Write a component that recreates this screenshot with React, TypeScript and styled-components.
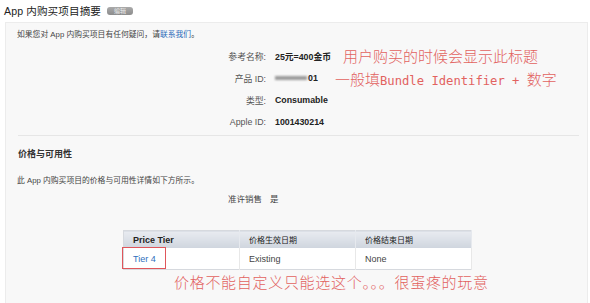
import styled, { createGlobalStyle } from "styled-components";

const GlobalStyle = createGlobalStyle`
  html, body {
    margin: 0;
    padding: 0;
    background: #ffffff;
  }
  body {
    font-family: "Liberation Sans", "Noto Sans CJK SC", sans-serif;
    color: #333;
  }
`;

const Page = styled.div`
  position: relative;
  width: 590px;
  height: 303px;
  overflow: hidden;
`;

const Header = styled.div`
  display: flex;
  align-items: center;
  gap: 6px;
  height: 20px;
  padding: 0 0 0 4px;
`;

const Title = styled.h1`
  margin: 0;
  font-size: 10.6px;
  font-weight: 400;
  color: #222;
  letter-spacing: 0.1px;
`;

const Badge = styled.span`
  display: inline-flex;
  align-items: center;
  justify-content: center;
  width: 26px;
  height: 8px;
  border-radius: 3px;
  background: linear-gradient(#aaa, #8c8c8c);
  color: #eee;
  font-size: 6px;
  line-height: 1;
  margin-top: 1px;
`;

const Panel = styled.div`
  margin: 2px 2px 0 5px;
  height: 300px;
  box-sizing: border-box;
  background: #f8f8f8;
  border: 1px solid #ececec;
  border-bottom: none;
  padding: 6px 10px 0 11px;
`;

const Note = styled.p<{ $top?: number }>`
  margin: ${(p) => p.$top ?? 0}px 0 0;
  font-size: 7.8px;
  line-height: 12px;
  color: #444;
`;

const Link = styled.span`
  color: #2a6ab8;
`;

const Details = styled.div`
  display: grid;
  grid-template-columns: 249px auto;
  column-gap: 9px;
  grid-auto-rows: 22px;
  align-items: center;
  margin-top: 4px;
`;

const Label = styled.span`
  text-align: right;
  font-size: 8.8px;
  color: #555;
`;

const Value = styled.span`
  font-size: 8.8px;
  font-weight: 700;
  color: #222;
  display: flex;
  align-items: center;
`;

const Blur = styled.span`
  display: inline-block;
  width: 32px;
  height: 4px;
  background: #9a9a9a;
  filter: blur(1.2px);
  margin-right: 1px;
`;

const Divider = styled.hr`
  margin: 2px 0 0 1px;
  border: none;
  border-top: 1px solid #e6e6e6;
  width: 561px;
`;

const SectionTitle = styled.h2`
  margin: 11px 0 0 1px;
  font-size: 9px;
  font-weight: 700;
  color: #333;
  line-height: 14px;
`;

const SaleRow = styled.div`
  display: flex;
  gap: 8px;
  margin: 6px 0 0 211px;
  font-size: 8.5px;
  color: #444;
  line-height: 12px;
`;

const Table = styled.table`
  margin: 25px 0 0 106px;
  width: 349px;
  border-collapse: collapse;
  font-size: 9px;
  border: 1px solid #d6d9de;
`;

const Th = styled.th<{ $bold?: boolean }>`
  height: 17px;
  padding: 0 0 0 9px;
  text-align: left;
  font-weight: ${(p) => (p.$bold ? 700 : 400)};
  font-size: ${(p) => (p.$bold ? 9 : 8)}px;
  color: #222;
  background: linear-gradient(#e8ebf0, #cfd5de);
  border-right: 1px solid #e6e9ee;
  width: 33.33%;
`;

const Td = styled.td<{ $link?: boolean }>`
  position: relative;
  height: 21px;
  padding: 0 0 0 9px;
  background: #fff;
  color: ${(p) => (p.$link ? "#2f6fbd" : "#444")};
  border-right: 1px solid #e8e8e8;
`;

const Highlight = styled.span`
  position: absolute;
  left: -2px;
  top: -1px;
  width: 44px;
  height: 22px;
  border: 1.5px solid #e0565b;
  box-sizing: border-box;
`;

const Annotation = styled.div<{ $x: number; $y: number; $spacing?: number }>`
  position: absolute;
  left: ${(p) => p.$x}px;
  top: ${(p) => p.$y}px;
  font-family: "Noto Sans CJK SC", sans-serif;
  font-size: 15px;
  font-weight: 300;
  color: #e2625f;
  letter-spacing: ${(p) => p.$spacing ?? 0}px;
  white-space: nowrap;
  line-height: 18px;
`;

const Latin = styled.span`
  font-family: "DejaVu Sans Mono", monospace;
  font-size: 12.2px;
`;

export default function App() {
  return (
    <Page>
      <GlobalStyle />
      <Header>
        <Title>App 内购买项目摘要</Title>
        <Badge>编辑</Badge>
      </Header>
      <Panel>
        <Note>
          如果您对 App 内购买项目有任何疑问，请<Link>联系我们</Link>。
        </Note>
        <Details>
          <Label>参考名称:</Label>
          <Value>25元=400金币</Value>
          <Label>产品 ID:</Label>
          <Value>
            <Blur />
            01
          </Value>
          <Label>类型:</Label>
          <Value>Consumable</Value>
          <Label>Apple ID:</Label>
          <Value>1001430214</Value>
        </Details>
        <Divider />
        <SectionTitle>价格与可用性</SectionTitle>
        <Note $top={14}>此 App 内购买项目的价格与可用性详情如下方所示。</Note>
        <SaleRow>
          <span>准许销售</span>
          <span>是</span>
        </SaleRow>
        <Table>
          <thead>
            <tr>
              <Th $bold>Price Tier</Th>
              <Th>价格生效日期</Th>
              <Th>价格结束日期</Th>
            </tr>
          </thead>
          <tbody>
            <tr>
              <Td $link>
                <Highlight />
                Tier 4
              </Td>
              <Td>Existing</Td>
              <Td>None</Td>
            </tr>
          </tbody>
        </Table>
      </Panel>
      <Annotation $x={343} $y={47}>
        用户购买的时候会显示此标题
      </Annotation>
      <Annotation $x={335} $y={70}>
        一般填<Latin>Bundle Identifier + </Latin>数字
      </Annotation>
      <Annotation $x={174} $y={273} $spacing={0.7}>
        价格不能自定义只能选这个。。。很蛋疼的玩意
      </Annotation>
    </Page>
  );
}
